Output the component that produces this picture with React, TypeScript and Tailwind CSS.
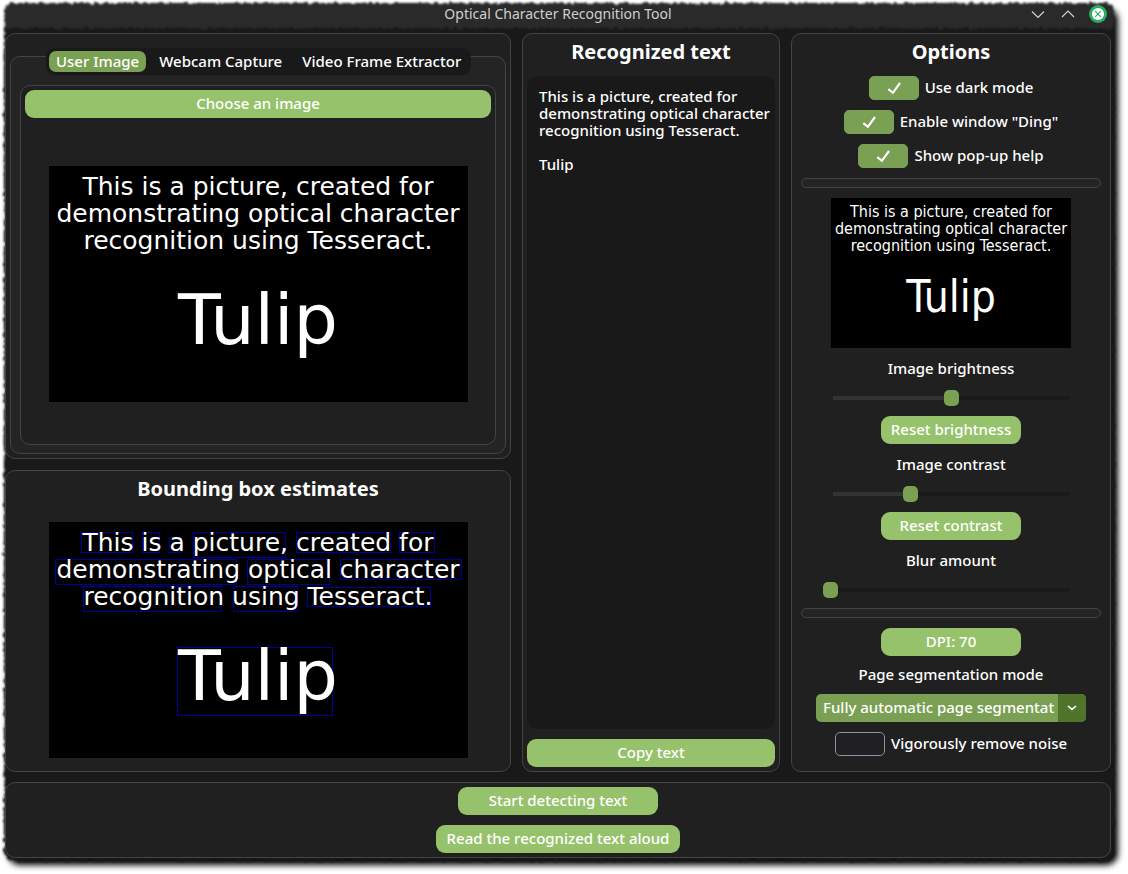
import { useState } from "react";
import type { ReactNode } from "react";

const PANEL = "flex flex-col rounded-[10px] border border-[#444444] bg-[#202020]";
const BUTTON =
  "h-7 min-w-[140px] shrink-0 rounded-[9px] bg-[#96c26c] px-2 pb-0.5 text-center whitespace-nowrap text-white hover:bg-[#7aa053]";

// x, y, width, height of every detected word
const WORD_BOXES = [
  [33, 10, 51, 20],
  [94, 10, 17, 20],
  [121, 15, 12, 15],
  [145, 10, 92, 25],
  [248, 10, 94, 20],
  [351, 10, 35, 20],
  [7, 37, 181, 25],
  [199, 37, 82, 25],
  [292, 37, 121, 20],
  [35, 64, 138, 25],
  [185, 64, 64, 25],
  [259, 65, 123, 19],
  [129, 125, 155, 68],
];

function SamplePicture({ children }: { children?: ReactNode }) {
  return (
    <div className="relative h-[236px] w-[419px] shrink-0 self-center overflow-hidden bg-black pt-[7px] text-center font-['DejaVu_Sans',sans-serif] font-normal whitespace-nowrap text-white">
      {children}
      <p className="relative text-[25px] leading-[27px]">
        This is a picture, created for
        <br />
        demonstrating optical character
        <br />
        recognition using Tesseract.
      </p>
      <p className="relative mt-[31px] text-[70px] leading-[70px]">Tulip</p>
    </div>
  );
}

function PreviewPicture() {
  return (
    <div className="h-[150px] w-60 shrink-0 overflow-hidden bg-black pt-[5px] text-center font-['DejaVu_Sans_Condensed','DejaVu_Sans',sans-serif] font-normal whitespace-nowrap text-white">
      <p className="text-[16px] leading-[17px]">
        This is a picture, created for
        <br />
        demonstrating optical character
        <br />
        recognition using Tesseract.
      </p>
      <p className="mt-[21px] text-[44px] leading-[44px]">Tulip</p>
    </div>
  );
}

function Heading({ children }: { children: ReactNode }) {
  return <h2 className="h-7 shrink-0 text-center text-[20px] leading-7 font-bold">{children}</h2>;
}

function Check({ label, initial }: { label: string; initial: boolean }) {
  const [on, setOn] = useState(initial);
  return (
    <label className="flex h-6 items-center gap-1.5">
      <span className="relative h-6 w-[50px]">
        <input
          type="checkbox"
          checked={on}
          onChange={() => setOn(!on)}
          className="block h-6 w-[50px] appearance-none rounded-[5px] border border-[#8f909c] bg-[#202024] checked:border-[#7aa053] checked:bg-[#7aa053]"
        />
        {on && (
          <svg viewBox="0 0 16 14" className="pointer-events-none absolute top-[5px] left-[18px] h-3.5 w-4">
            <path d="M1.3 8.2l4.6 3.6L13 2" fill="none" stroke="white" strokeWidth="2.2" />
          </svg>
        )}
      </span>
      <span className="pb-0.5">{label}</span>
    </label>
  );
}

function Slider({ id, label, initial }: { id: string; label: string; initial: number }) {
  const [value, setValue] = useState(initial);
  const fill = Math.max(0, Math.round((value / 100) * 241) - 2);
  return (
    <>
      <label htmlFor={id} className="h-[22px] leading-5">
        {label}
      </label>
      <input
        id={id}
        type="range"
        value={value}
        onChange={(e) => setValue(Number(e.target.value))}
        style={{
          background: `linear-gradient(to right, #333333 ${fill}px, #191919 ${fill}px) center / 236px 4px no-repeat`,
        }}
        className="block h-4 w-64 shrink-0 appearance-none [&::-webkit-slider-thumb]:h-4 [&::-webkit-slider-thumb]:w-[15px] [&::-webkit-slider-thumb]:appearance-none [&::-webkit-slider-thumb]:rounded-[5px] [&::-webkit-slider-thumb]:bg-[#7aa053]"
      />
    </>
  );
}

function Divider() {
  return <div className="h-2.5 w-full shrink-0 rounded-[5px] border border-[#444444] bg-[#242424]" />;
}

function Backdrop() {
  return (
    <>
      <svg className="absolute h-0 w-0" aria-hidden="true">
        <filter id="torn" x="-2%" y="-2%" width="104%" height="104%" colorInterpolationFilters="sRGB">
          <feTurbulence type="fractalNoise" baseFrequency="0.2" numOctaves="2" seed="4" result="n" />
          <feDisplacementMap in="SourceGraphic" in2="n" scale="6" xChannelSelector="R" yChannelSelector="G" />
          <feGaussianBlur stdDeviation="0.9" />
        </filter>
      </svg>
      <div className="absolute top-2 right-[10px] bottom-[9px] left-2 rounded-xl bg-black blur-[3px]" />
      <div className="absolute top-[3px] right-[14px] bottom-[13px] left-1 overflow-hidden rounded-[9px] bg-[#191919] [filter:url(#torn)]">
        <div className="h-[25px] bg-[#2a2a2a]" />
      </div>
    </>
  );
}

function TitleBar() {
  const icon = "block h-[18px] w-[18px]";
  return (
    <header className="grid h-7 grid-cols-[1fr_auto_1fr] items-center text-[#cfcfcf]">
      <span />
      <h1 className="text-[14px] leading-5 font-normal">Optical Character Recognition Tool</h1>
      <div className="flex items-center justify-end gap-3 pr-1">
        <button aria-label="Minimize">
          <svg viewBox="0 0 18 18" className={icon}>
            <path d="M3 6.5l6 6 6-6" fill="none" stroke="#d6d6d6" strokeWidth="1.1" />
          </svg>
        </button>
        <button aria-label="Maximize">
          <svg viewBox="0 0 18 18" className={icon}>
            <path d="M3 12l6-6 6 6" fill="none" stroke="#d6d6d6" strokeWidth="1.1" />
          </svg>
        </button>
        <button aria-label="Close">
          <svg viewBox="0 0 18 18" className={icon}>
            <circle cx="9" cy="9" r="9" fill="#27ae60" />
            <circle cx="9" cy="9" r="6.1" fill="white" />
            <path d="M6.2 6.2l5.6 5.6M11.8 6.2l-5.6 5.6" stroke="#27ae60" strokeWidth="1.2" />
          </svg>
        </button>
      </div>
    </header>
  );
}

const TABS = ["User Image", "Webcam Capture", "Video Frame Extractor"];

export default function App() {
  const [tab, setTab] = useState(0);
  return (
    <div className="relative isolate min-h-screen bg-white pr-[17px] pb-4 pl-[5px] font-['Noto_Sans',sans-serif] text-[15px] leading-5 font-medium text-white">
      <Backdrop />
      <div className="relative">
        <TitleBar />
        <div className="mt-[5px] grid grid-cols-[minmax(0,506fr)_minmax(0,258fr)_minmax(0,320fr)] gap-[11px]">
          <div className="flex flex-col gap-[11px]">
            <section className={`${PANEL} px-1 pt-[22px] pb-1`}>
              <div className="flex flex-col rounded-[10px] border border-[#444444] bg-[#242424] px-[9px] pb-2">
                <div className="-mt-[9px] ml-[26px] flex h-[27px] gap-1.5 self-start rounded-[9px] bg-[#191919] p-[3px]">
                  {TABS.map((name, i) => (
                    <button
                      key={name}
                      onClick={() => setTab(i)}
                      className={`h-[21px] rounded-[7px] px-[7px] leading-[21px] whitespace-nowrap ${tab === i ? "bg-[#7aa053]" : ""}`}
                    >
                      {name}
                    </button>
                  ))}
                </div>
                <div className={`${PANEL} mt-[10px] px-1 pt-1 pb-[42px]`}>
                  <button className={`${BUTTON} mb-12 w-full`}>Choose an image</button>
                  <SamplePicture />
                </div>
              </div>
            </section>
            <section className={`${PANEL} gap-[19px] px-1 pt-1 pb-[13px]`}>
              <Heading>Bounding box estimates</Heading>
              <SamplePicture>
                <svg viewBox="0 0 419 236" className="absolute inset-0 h-full w-full">
                  {WORD_BOXES.map(([x, y, w, h]) => (
                    <rect key={`${x}-${y}`} x={x - 0.5} y={y + 0.5} width={w} height={h} fill="none" stroke="#00009c" />
                  ))}
                </svg>
              </SamplePicture>
            </section>
          </div>

          <section className={`${PANEL} gap-2.5 px-1 pt-1 pb-1`}>
            <Heading>Recognized text</Heading>
            <textarea
              aria-label="Recognized text"
              className="min-h-0 w-full flex-1 resize-none rounded-[10px] bg-[#191919] py-3 pr-1 pl-3 leading-[17px] outline-none"
              defaultValue={
                "This is a picture, created for\ndemonstrating optical character\nrecognition using Tesseract.\n\nTulip"
              }
            />
            <button className={BUTTON}>Copy text</button>
          </section>

          <section className={`${PANEL} items-center gap-2.5 px-[9px] pt-1 pb-[14px]`}>
            <Heading>Options</Heading>
            <Check label="Use dark mode" initial />
            <Check label={'Enable window "Ding"'} initial />
            <Check label="Show pop-up help" initial />
            <Divider />
            <PreviewPicture />
            <Slider id="brightness" label="Image brightness" initial={50} />
            <button className={BUTTON}>Reset brightness</button>
            <Slider id="contrast" label="Image contrast" initial={33} />
            <button className={BUTTON}>Reset contrast</button>
            <Slider id="blur" label="Blur amount" initial={0} />
            <Divider />
            <button className={BUTTON}>DPI: 70</button>
            <label htmlFor="segmentation" className="h-[18px] leading-4">
              Page segmentation mode
            </label>
            <div className="relative w-[270px]">
              <select
                id="segmentation"
                className="block h-7 w-full appearance-none rounded-[5px] bg-[#7aa053] pr-[31px] pb-0.5 pl-[7px] text-white outline-none"
              >
                <option>Fully automatic page segmentation</option>
              </select>
              <span className="pointer-events-none absolute inset-y-0 right-0 flex w-7 items-center justify-center rounded-r-[5px] bg-[#50752a]">
                <svg viewBox="0 0 10 6" className="h-1.5 w-2.5">
                  <path d="M1 1l4 3.4L9 1" fill="none" stroke="white" strokeWidth="1.6" />
                </svg>
              </span>
            </div>
            <Check label="Vigorously remove noise" initial={false} />
          </section>
        </div>

        <footer className={`${PANEL} mt-2.5 items-center gap-2.5 py-1`}>
          <button className={`${BUTTON} w-[200px]`}>Start detecting text</button>
          <button className={`${BUTTON} w-[244px]`}>Read the recognized text aloud</button>
        </footer>
      </div>
    </div>
  );
}
